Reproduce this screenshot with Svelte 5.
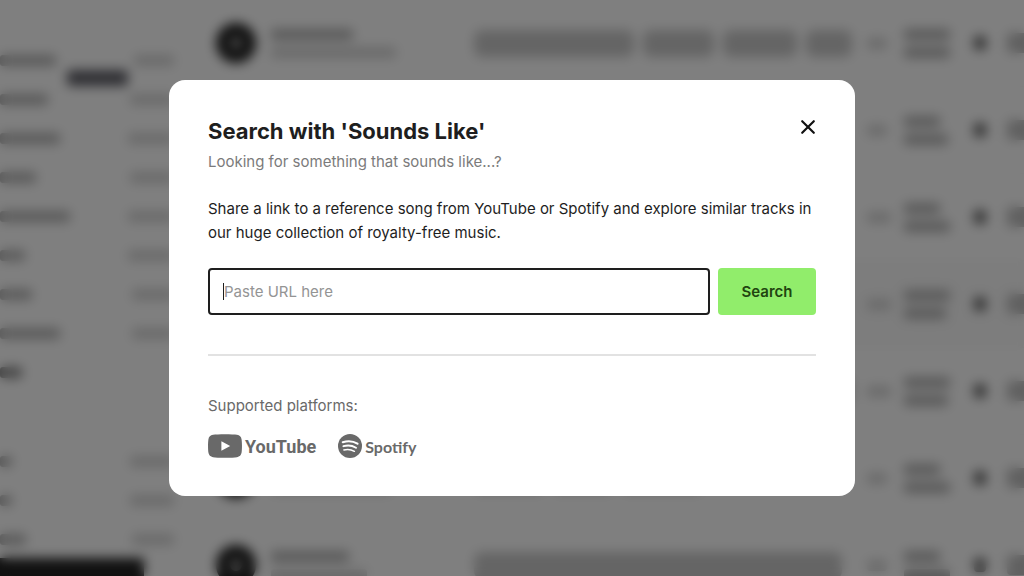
<script lang="ts">
  import { onMount } from "svelte";

  let url = $state("");
  let isOpen = $state(true);
  let urlInput = $state<HTMLInputElement | null>(null);

  const categories = [
    { name: 56, count: 40 },
    { name: 48, count: 44 },
    { name: 60, count: 46 },
    { name: 36, count: 44 },
    { name: 70, count: 46 },
    { name: 25, count: 46 },
    { name: 32, count: 42 },
    { name: 60, count: 42 },
    { name: 22, count: 0, active: true },
  ];

  const collections = [
    { name: 12, count: 44 },
    { name: 12, count: 44 },
    { name: 26, count: 42 },
    { name: 26, count: 0 },
  ];

  const tracks = [
    { title: 82, artist: 125, tags: [161, 72, 75, 46], bpm: 20, key: [46, 46] },
    { title: 70, artist: 110, tags: [80, 90, 70], bpm: 20, key: [36, 44] },
    { title: 96, artist: 90, tags: [70, 90, 60], bpm: 24, key: [36, 46] },
    { title: 80, artist: 104, tags: [90, 60, 80], bpm: 24, key: [46, 42] },
    { title: 64, artist: 90, tags: [190, 186], bpm: 24, key: [46, 44] },
    { title: 90, artist: 120, tags: [70, 60, 80], bpm: 20, key: [36, 46] },
    { title: 78, artist: 96, tags: [368], bpm: 20, key: [36, 46] },
  ];

  const close = () => {
    isOpen = false;
  };

  const handleSubmit = (event: SubmitEvent) => {
    event.preventDefault();
    url = url.trim();
  };

  const handleKeydown = (event: KeyboardEvent) => {
    if (event.key === "Escape") {
      close();
    }
  };

  onMount(() => {
    urlInput?.focus();
  });
</script>

<svelte:window onkeydown={handleKeydown} />

<div class="library" aria-hidden="true">
  <div class="sidebar">
    {#each [categories, collections] as group}
      <div class="group">
        {#each group as item}
          <div class="category" class:active={item.active}>
            <span class="bar" style:width="{item.name}px"></span>
            <span class="bar faint" style:width="{item.count}px"></span>
          </div>
        {/each}
      </div>
    {/each}
    <div class="badge"></div>
    <div class="player"></div>
  </div>

  <div class="tracks">
    {#each tracks as track, i}
      <div class="track" class:hovered={i === 3}>
        <span class="cover"></span>
        <div class="lines">
          <span class="bar" style:width="{track.title}px"></span>
          <span class="bar faint" style:width="{track.artist}px"></span>
        </div>
        <div class="tags">
          {#each track.tags as tag}
            <span class="tag" style:width="{tag}px"></span>
          {/each}
        </div>
        <span class="bar faint" style:width="{track.bpm}px"></span>
        <div class="lines">
          {#each track.key as line}
            <span class="bar" style:width="{line}px"></span>
          {/each}
        </div>
        <span class="dot"></span>
        <span class="more"></span>
      </div>
    {/each}
  </div>
</div>

{#if isOpen}
  <div class="overlay">
    <div class="modal" role="dialog" aria-modal="true" aria-labelledby="modal-title">
      <header>
        <div>
          <h2 id="modal-title">Search with 'Sounds Like'</h2>
          <p class="subtitle">Looking for something that sounds like...?</p>
        </div>
        <button type="button" class="close" aria-label="Close" onclick={close}>
          <svg viewBox="0 0 16 16" width="16" height="16" fill="none" stroke="currentColor">
            <path d="M2.2 2.2 13.8 13.8M13.8 2.2 2.2 13.8" stroke-width="2.2" stroke-linecap="round" />
          </svg>
        </button>
      </header>

      <p class="intro">
        Share a link to a reference song from YouTube or Spotify and explore similar tracks in our
        huge collection of royalty-free music.
      </p>

      <form onsubmit={handleSubmit}>
        <div class="field">
          <input
            bind:this={urlInput}
            bind:value={url}
            type="text"
            aria-label="Reference song URL"
            placeholder="Paste URL here"
          />
          {#if !url}
            <span class="caret"></span>
          {/if}
        </div>
        <button type="submit" class="submit">Search</button>
      </form>

      <footer>
        <p>Supported platforms:</p>
        <div class="platforms">
          <span class="platform youtube">
            <svg viewBox="0 0 34 24" width="34" height="24" aria-hidden="true">
              <path
                fill="currentColor"
                d="M5 .8C9 .1 25 .1 29 .8c2.6.4 4.2 2 4.6 4.6.5 3.5.5 9.7 0 13.2-.4 2.6-2 4.2-4.6 4.6-4 .7-20 .7-24 0C2.400 22.800.8 21.200.4 18.600c-.5-3.500-.5-9.700 0-13.200C.8 2.800 2.400 1.200 5 .8Z"
              />
              <path fill="#fff" d="M13.4 7.2v9.6l8.8-4.8z" />
            </svg>
            <span>YouTube</span>
          </span>
          <span class="platform spotify">
            <svg viewBox="0 0 24 24" width="24" height="24" aria-hidden="true">
              <circle cx="12" cy="12" r="12" fill="currentColor" />
              <g fill="none" stroke="#fff" stroke-linecap="round">
                <path d="M4.8 8.2c5-1.5 10.6-1 14.7 1.4" stroke-width="2.2" />
                <path d="M5.4 12.2c4.3-1.2 8.9-.7 12.6 1.5" stroke-width="1.9" />
                <path d="M5.9 15.9c3.7-.9 7.3-.5 10.5 1.4" stroke-width="1.5" />
              </g>
            </svg>
            <span>Spotify</span>
          </span>
        </div>
      </footer>
    </div>
  </div>
{/if}

<style>
  :global(body) {
    margin: 0;
    background: #fff;
    font-family: Inter, "Liberation Sans", sans-serif;
    color: #1e1e1e;
  }

  .library {
    display: flex;
    height: 100vh;
    overflow: hidden;
  }

  .sidebar {
    position: relative;
    flex: none;
    width: 174px;
    padding-top: 41px;
    margin-right: 20px;
  }

  .group {
    margin-bottom: 50px;
  }

  .category {
    display: flex;
    align-items: center;
    justify-content: space-between;
    height: 39px;
  }

  .bar {
    display: block;
    height: 11px;
    border-radius: 3px;
    background: #b4b4b4;
  }

  .bar.faint {
    background: #d4d4d4;
  }

  .active .bar {
    background: #888;
  }

  .badge {
    position: absolute;
    top: 70px;
    left: 67px;
    width: 61px;
    height: 16px;
    border-radius: 4px;
    background: #606068;
  }

  .player {
    position: absolute;
    top: 558px;
    left: 0;
    width: 144px;
    height: 60px;
    background: #222;
  }

  .tracks {
    flex: 1;
    min-width: 0;
  }

  .track {
    display: grid;
    grid-template-columns: 40px 188px 378px 22px 55px 18px 20px;
    align-items: center;
    column-gap: 15px;
    box-sizing: border-box;
    height: 87px;
    padding-left: 22px;
    border-bottom: 1px solid #f8f8f8;
  }

  .track.hovered {
    background: #fafafa;
  }

  .cover {
    width: 12px;
    height: 12px;
    border: 14px solid #222;
    border-radius: 50%;
    background: #999;
  }

  .lines {
    display: grid;
    gap: 7px;
  }

  .tags {
    display: flex;
    gap: 9px;
  }

  .tag {
    height: 27px;
    border-radius: 8px;
    background: #cacaca;
  }

  .dot {
    width: 12px;
    height: 14px;
    border-radius: 4px;
    background: #666;
  }

  .more {
    width: 20px;
    height: 20px;
    border-radius: 4px;
    background: #c0c0c0;
  }

  .overlay {
    position: fixed;
    inset: 0;
    display: grid;
    place-items: center;
    padding: 24px;
    background: rgba(0, 0, 0, 0.5);
    backdrop-filter: blur(6px);
  }

  .modal {
    box-sizing: border-box;
    width: 100%;
    max-width: 686px;
    padding: 36px 39px 38px;
    border-radius: 16px;
    background: #fff;
  }

  header {
    display: flex;
    align-items: flex-start;
    justify-content: space-between;
  }

  h2,
  p {
    margin: 0;
  }

  h2 {
    font-size: 22px;
    font-weight: 700;
    line-height: 30px;
  }

  p {
    font-size: 15px;
    line-height: 24px;
  }

  .subtitle {
    margin-top: 4px;
    color: #7b7b7b;
  }

  .close {
    display: flex;
    padding: 3px 4px;
    border: 0;
    margin-right: -4px;
    background: none;
    color: #111;
    cursor: pointer;
  }

  .intro {
    margin-top: 23px;
  }

  form {
    display: flex;
    gap: 8px;
    margin-top: 23px;
  }

  .field {
    position: relative;
    flex: 1;
    min-width: 0;
  }

  input {
    box-sizing: border-box;
    display: block;
    width: 100%;
    height: 47px;
    padding: 0 14px;
    border: 2px solid #1e1e1e;
    border-radius: 4px;
    outline: 0;
    background: #fff;
    color: #1e1e1e;
    font: inherit;
    font-size: 15px;
  }

  input:placeholder-shown {
    caret-color: transparent;
  }

  input::placeholder {
    color: #949494;
    opacity: 1;
  }

  .caret {
    position: absolute;
    top: 15px;
    left: 15px;
    width: 1px;
    height: 17px;
    background: #1e1e1e;
    pointer-events: none;
  }

  .submit {
    width: 98px;
    border: 0;
    border-radius: 4px;
    background: #91ed6b;
    color: #214510;
    font: inherit;
    font-size: 15px;
    font-weight: 600;
    cursor: pointer;
  }

  footer {
    padding-top: 38px;
    border-top: 2px solid #e2e2e2;
    margin-top: 39px;
    color: #696969;
  }

  .platforms {
    display: flex;
    gap: 22px;
    margin-top: 16px;
  }

  .platform {
    display: flex;
    align-items: center;
    gap: 3px;
    height: 24px;
  }

  .youtube {
    font: bold 18px Roboto, sans-serif;
  }

  .spotify {
    font: bold 16px Lato, sans-serif;
  }
</style>
